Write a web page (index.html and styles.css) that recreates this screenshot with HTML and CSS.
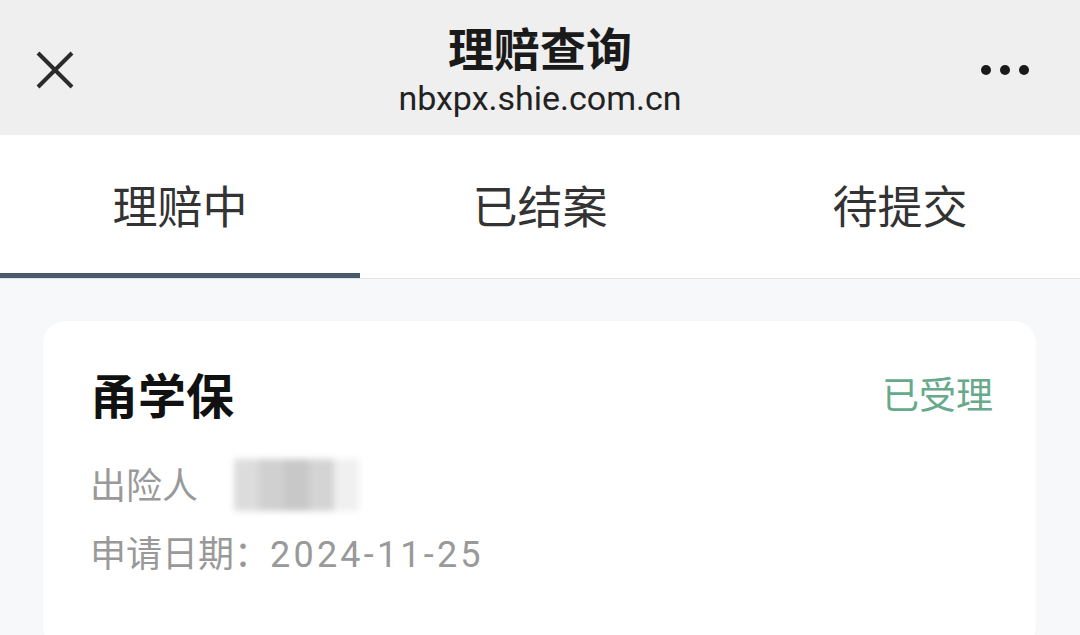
FILE: index.html
```html
<!DOCTYPE html>
<html lang="zh-CN">
<head>
    <meta charset="UTF-8">
    <meta name="viewport" content="width=device-width, initial-scale=1.0">
    <title>理赔查询</title>
    <link rel="stylesheet" href="styles.css">
</head>
<body>
    <header class="topbar">
        <div class="close">
            <svg width="38" height="38" viewBox="0 0 38 38">
                <path d="M2 2 L36 36 M36 2 L2 36" stroke="#2b2b2b" stroke-width="4" fill="none"/>
            </svg>
        </div>
        <div class="heading">
            <h1>理赔查询</h1>
            <p>nbxpx.shie.com.cn</p>
        </div>
        <div class="more">
            <span></span><span></span><span></span>
        </div>
    </header>

    <!-- Tabs -->
    <nav class="tabs">
        <div class="tab active">理赔中</div>
        <div class="tab">已结案</div>
        <div class="tab">待提交</div>
    </nav>

    <main class="list">
        <section class="card">
            <div class="card-head">
                <h2>甬学保</h2>
                <span class="status">已受理</span>
            </div>
            <p class="row">出险人<span class="mosaic"><i></i><i></i><i></i><i></i><i></i></span></p>
            <p class="row">申请日期：<span class="date">2024-11-25</span></p>
        </section>
    </main>
</body>
</html>
```

FILE: styles.css
```css
body {
    margin: 0;
    padding: 0;
    width: 1080px;
    height: 635px;
    overflow: hidden;
    background-color: #f6f8fa;
    font-family: Roboto, "Noto Sans CJK SC", sans-serif;
    color: #333;
}

/* Top bar */
.topbar {
    display: grid;
    grid-template-columns: 1fr auto 1fr;
    align-items: center;
    height: 135px;
    padding: 0 36px;
    box-sizing: border-box;
    background-color: #efefef;
}
.close {
    display: flex;
    align-items: center;
    padding-top: 4px;
}
.close svg {
    display: block;
}
.heading {
    text-align: center;
    padding-top: 2px;
}
.heading h1 {
    margin: 0;
    font-family: "Noto Sans CJK SC", sans-serif;
    font-size: 46px;
    line-height: 52px;
    font-weight: 700;
    color: #1a1a1a;
}
.heading p {
    margin: 6px 0 0;
    font-size: 34px;
    line-height: 40px;
    color: #222;
}
.more {
    display: flex;
    justify-content: flex-end;
    gap: 9px;
    padding: 4px 15px 0 0;
}
.more span {
    width: 10px;
    height: 10px;
    border-radius: 50%;
    background-color: #1a1a1a;
}

/* Tabs */
.tabs {
    display: flex;
    background-color: #fff;
    border-bottom: 1px solid #e2e4e6;
}
.tab {
    flex: 1;
    height: 143px;
    box-sizing: border-box;
    display: flex;
    align-items: center;
    justify-content: center;
    border-bottom: 5px solid transparent;
    font-family: "Noto Sans CJK SC", sans-serif;
    font-size: 45px;
    color: #333;
}
.tab.active {
    border-bottom-color: #4a5a6c;
}

/* Claim list */
.list {
    padding: 42px 44px 0 43px;
}
.card {
    background-color: #fff;
    border-radius: 22px;
    padding: 43px 43px 60px 47px;
    box-shadow: 0 0 3px rgba(0, 0, 0, 0.02);
}
.card-head {
    display: flex;
    justify-content: space-between;
    align-items: center;
    height: 58px;
    margin-bottom: 31px;
}
.card-head h2 {
    margin: 0;
    font-family: "Noto Sans CJK SC", sans-serif;
    font-size: 48px;
    line-height: 58px;
    font-weight: 700;
    color: #111;
}
.status {
    font-family: "Noto Sans CJK SC", sans-serif;
    font-size: 37px;
    color: #67a98b;
}
.row {
    margin: 0;
    font-size: 36px;
    line-height: 68px;
    color: #999;
}
.date {
    letter-spacing: 3.2px;
}

/* blurred name */
.mosaic {
    display: inline-flex;
    vertical-align: middle;
    margin-left: 36px;
    width: 125px;
    height: 52px;
    filter: blur(3px);
    position: relative;
    top: -4px;
}
.mosaic i {
    flex: 1;
    background-color: #dcdcdc;
}
.mosaic i:nth-child(2) {
    background-color: #d0d0d0;
}
.mosaic i:nth-child(3) {
    background-color: #c8c8c8;
}
.mosaic i:nth-child(4) {
    background-color: #d4d4d4;
}
.mosaic i:nth-child(5) {
    background-color: #f0f0f0;
}
```
